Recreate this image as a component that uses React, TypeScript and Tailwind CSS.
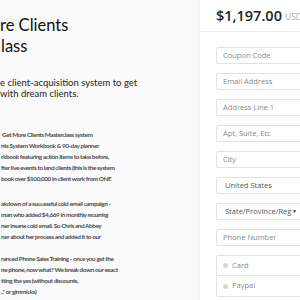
import React from "react";

const lato = { fontFamily: 'Lato, "Open Sans", sans-serif' };
const open = { fontFamily: '"Open Sans", "Noto Sans", sans-serif' };

function Field({ label, dark }: { label: string; dark?: boolean }) {
  return (
    <div
      className={`h-[17px] w-[92px] shrink-0 rounded-[2px] border border-[#e2e2e2] bg-white pl-[6px] text-[7.5px] leading-[15px] ${
        dark ? "text-[#555]" : "text-[#8a8a8a]"
      }`}
    >
      {label}
    </div>
  );
}

export default function App() {
  return (
    <div className="flex h-[300px] w-[300px] overflow-hidden bg-[#fafafa]" style={open}>
      <div className="w-[200px] shrink-0 overflow-hidden" style={lato}>
        <div className="pt-[15px] text-[16.5px] leading-[21px] font-normal whitespace-nowrap text-[#111]">
          <div>re Clients</div>
          <div className="pl-[1px]">lass</div>
        </div>
        <div className="mt-[20px] text-[9.5px] leading-[11px] whitespace-nowrap text-[#222]">
          <div>e client-acquisition system to get</div>
          <div>with dream clients.</div>
        </div>
        <div className="mt-[30px] pl-[1px] text-[6.4px] leading-[11px] font-bold tracking-[-0.42px] whitespace-nowrap text-[#4d4d4d]">
          <div>
            <div className="pl-[1px]">Get More Clients Masterclass system</div>
            <div>nts System Workbook &amp; 90-day planner</div>
            <div>rkbook featuring action items to take before,</div>
            <div>fter live events to land clients (this is the system</div>
            <div>book over $100,000 in client work from ONE</div>
          </div>
          <div className="mt-[14px]">
            <div>akdown of a successful cold email campaign -</div>
            <div>
              man who added $4,669 in monthly <i>recurring</i>
            </div>
            <div>ner insane cold email. So Chris and Abbey</div>
            <div>ner about her process and added it to our</div>
          </div>
          <div className="mt-[10.5px]">
            <div>ranced Phone Sales Training - once you get the</div>
            <div>ne phone, now what? We break down our exact</div>
            <div>tting the yes (without discounts,</div>
            <div>.," or gimmicks)</div>
          </div>
        </div>
      </div>
      <div className="flex min-w-0 flex-1 flex-col bg-white shadow-[-2px_0_4px_rgba(0,0,0,0.04)]">
        <div className="flex h-[32px] shrink-0 items-center gap-[3px] border-b border-[#eeeeee] pl-[16px] whitespace-nowrap">
          <span className="text-[14.5px] font-semibold text-[#222]">$1,197.00</span>
          <span className="mt-[4px] text-[8.5px] text-[#aaa]">USD</span>
        </div>
        <div className="flex flex-col gap-[9px] pt-[15px] pl-[16px]">
          <Field label="Coupon Code" />
          <Field label="Email Address" />
          <Field label="Address Line 1" />
          <Field label="Apt, Suite, Etc" />
          <Field label="City" />
          <div className="h-[17px] w-[92px] shrink-0 rounded-[2px] border border-[#e2e2e2] bg-white pl-[8px] text-[7.5px] leading-[15px] text-[#555]">
            United States
          </div>
          <div className="flex h-[17px] w-[92px] shrink-0 items-center justify-between rounded-[2px] border border-[#e2e2e2] bg-white pr-[10px] pl-[8px] text-[7.5px] leading-[15px] whitespace-nowrap text-[#555]">
            <span className="overflow-hidden">State/Province/Regi</span>
            <span className="text-[5px] text-[#333]">▼</span>
          </div>
          <Field label="Phone Number" />
          <div className="flex w-[92px] shrink-0 flex-col rounded-[2px] border border-[#e2e2e2] bg-white text-[7.5px] text-[#8a8a8a]">
            <div className="flex h-[20px] items-center gap-[4px] border-b border-[#e2e2e2] pl-[6px]">
              <span className="h-[5px] w-[5px] rounded-full bg-[#d6d6d6]" />
              <span>Card</span>
            </div>
            <div className="flex h-[20px] items-center gap-[4px] pl-[6px]">
              <span className="h-[5px] w-[5px] rounded-full bg-[#d6d6d6]" />
              <span>Paypal</span>
            </div>
          </div>
        </div>
      </div>
    </div>
  );
}
